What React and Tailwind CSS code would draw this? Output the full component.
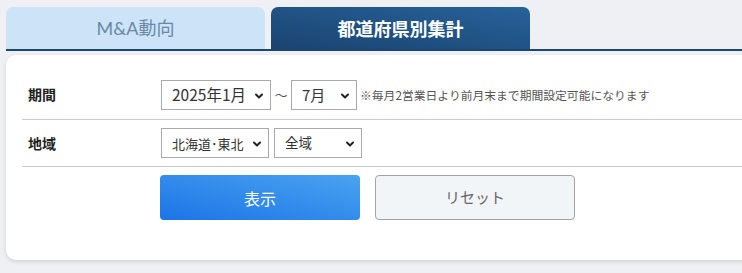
import React from 'react';
import { ChevronDown } from 'lucide-react';

const FONT = { fontFamily: '"Noto Sans CJK JP", "Noto Sans", sans-serif' };

function Select({ value, width, size = 'text-[16px]' }) {
  return (
    <div className={`relative h-[30px] ${width} border border-[#aaaaaa] bg-white flex items-center pl-[10px] ${size} text-[#333]`}>
      <span className="leading-none">{value}</span>
      <ChevronDown size={12} strokeWidth={4} className="absolute right-[5px] top-[9px] text-[#222]" />
    </div>
  );
}

export default function App() {
  return (
    <div className="w-[742px] h-[273px] overflow-hidden bg-[#eff0f4] pt-[7px] pl-[6px]" style={FONT}>
      {/* Tabs */}
      <div className="w-[760px] flex gap-[6px] h-[44px] border-b-2 border-[#1b4674]">
        <div className="w-[259px] rounded-t-[7px] bg-[#cce3f8] flex items-center justify-center text-[18px] text-[#6a89a5]" style={{ fontFamily: 'Lato, "Noto Sans CJK JP", sans-serif' }}>
          M&amp;A動向
        </div>
        <div className="w-[259px] rounded-t-[7px] bg-gradient-to-tr from-[#1a4470] to-[#27629a] flex items-center justify-center text-[18px] font-bold text-white">
          都道府県別集計
        </div>
      </div>

      {/* Panel */}
      <div className="mt-[4px] w-[770px] h-[205px] bg-white rounded-[10px] shadow-[0_2px_4px_rgba(0,0,0,0.12)] pl-[16px] pt-[15px]">
        <div className="flex items-center h-[50px] border-b border-[#cccccc]">
          <div className="w-[139px] pl-[6px] text-[14px] font-bold text-[#222]">期間</div>
          <Select value="2025年1月" width="w-[110px]" size="text-[15.5px]" />
          <span className="w-[20px] text-center text-[13px] text-[#555]">〜</span>
          <Select value="7月" width="w-[66px]" size="text-[15px]" />
          <span className="ml-[3px] text-[11.8px] text-[#555]">※毎月2営業日より前月末まで期間設定可能になります</span>
        </div>
        <div className="flex items-center h-[47px] border-b border-[#cccccc]">
          <div className="w-[139px] pl-[6px] text-[14px] font-bold text-[#222]">地域</div>
          <Select value="北海道･東北" width="w-[108px]" size="text-[13px]" />
          <div className="w-[5px]" />
          <Select value="全域" width="w-[88px]" size="text-[13.5px]" />
        </div>
        <div className="flex gap-[15px] mt-[8px] pl-[138px]">
          <button className="w-[200px] h-[45px] rounded-[4px] bg-gradient-to-tr from-[#1b74e6] to-[#4aa3f0] text-white text-[16px]">表示</button>
          <button className="w-[200px] h-[45px] rounded-[4px] bg-[#f2f5f8] border border-[#a3a3a3] text-[#666] text-[15px]">リセット</button>
        </div>
      </div>
    </div>
  );
}
